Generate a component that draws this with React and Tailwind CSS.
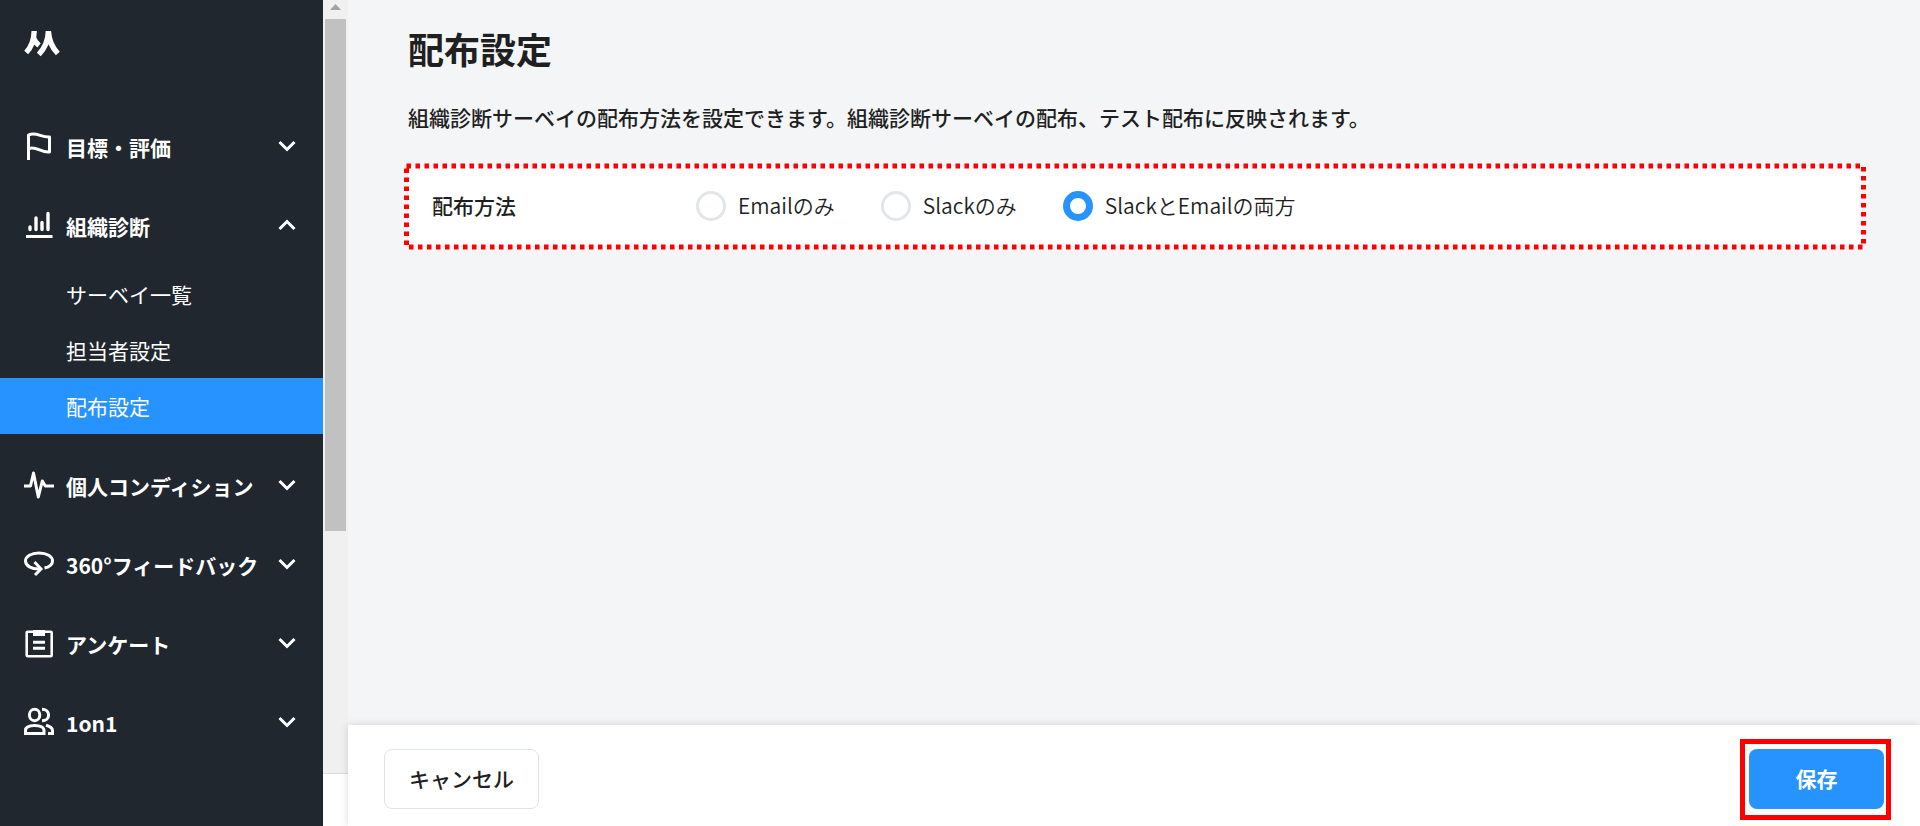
import React, { useState } from "react";

const iconProps = {
  viewBox: "0 0 30 30",
  fill: "none",
  stroke: "currentColor",
  strokeWidth: 3,
  className: "h-[30px] w-[30px] shrink-0",
  "aria-hidden": true,
};

const FlagIcon = () => (
  <svg {...iconProps}>
    <path
      d="M4.500 29V4C12 .5 17 6.500 25.500 6V21C17 22 12.500 14.500 4.500 17.500"
      strokeLinejoin="round"
    />
  </svg>
);

const ChartIcon = () => (
  <svg {...iconProps}>
    <path d="M2 26.500H28.500" />
    <path
      d="M6 17V19.500M12 8V19.500M18 12.500V19.500M24 3.500V19.500"
      strokeWidth="3.400"
      strokeLinecap="round"
    />
  </svg>
);

const PulseIcon = () => (
  <svg {...iconProps}>
    <path d="M0 16H6.500L9.500 3L14.300 27L18.300 11L21.300 16H30" strokeLinejoin="round" />
  </svg>
);

const RotateIcon = () => (
  <svg {...iconProps}>
    <path d="M16.500 20C7 20.500 1.500 16.500 1.500 12C1.500 7.300 7 3.900 15 3.900S28.500 7.300 28.500 12C28.500 15 26 17.800 20.500 19" />
    <path d="M10.500 13L17 20L11 26" />
  </svg>
);

const ClipboardIcon = () => (
  <svg {...iconProps}>
    <rect x="2.700" y="3.700" width="25" height="24.500" rx="1" strokeWidth="2.600" />
    <path d="M9 2H21V8H9Z" fill="currentColor" stroke="none" />
    <path d="M9 14.200H21M9 20.200H21" />
  </svg>
);

const UsersIcon = () => (
  <svg {...iconProps}>
    <ellipse cx="10.600" cy="8" rx="5.200" ry="5.700" />
    <path d="M18 2.200C22 2.200 24.600 4.500 24.600 8S22 13.800 18 13.800" />
    <path d="M1.500 26.600V23.500C1.500 20.500 5 18.500 10.700 18.500S20 20.500 20 23.500V26.600Z" />
    <path d="M22 18.300C26 19.500 28.500 21 28.500 23.500V26.600H24" />
  </svg>
);

const Chevron = ({ open }) => (
  <svg
    viewBox="0 0 18 12"
    fill="none"
    stroke="currentColor"
    strokeWidth="3"
    className="h-3 w-[18px] shrink-0"
    aria-hidden="true"
  >
    <path d={open ? "M1.500 10L9 2.500L16.500 10" : "M1.500 2L9 9.500L16.500 2"} />
  </svg>
);

const Logo = () => (
  <svg viewBox="0 0 36 26" fill="none" stroke="white" strokeWidth="5.400" className="h-[26px] w-9" aria-hidden="true">
    <path d="M2.200 21.500C6.500 17 10 10 10.200 0M9.500 7C11 11 12.500 12.500 15 14.500" />
    <path d="M14.800 23.500C20 18 24.200 11 24.400 0C25 10 28.500 17 33.800 22.500" />
  </svg>
);

const menu = [
  { label: "目標・評価", icon: FlagIcon },
  {
    label: "組織診断",
    icon: ChartIcon,
    children: ["サーベイ一覧", "担当者設定", "配布設定"],
  },
  { label: "個人コンディション", icon: PulseIcon },
  { label: "360°フィードバック", icon: RotateIcon },
  { label: "アンケート", icon: ClipboardIcon },
  { label: "1on1", icon: UsersIcon },
];

const methods = [
  { value: "email", label: "Emailのみ" },
  { value: "slack", label: "Slackのみ" },
  { value: "both", label: "SlackとEmailの両方" },
];

const Sidebar = () => {
  const [openMenu, setOpenMenu] = useState("組織診断");

  return (
    <aside className="w-[323px] shrink-0 bg-[#20272f] text-white">
      <a href="#home" aria-label="ホーム" className="block h-[108px] pt-[31px] pl-6">
        <Logo />
      </a>
      <nav>
        {menu.map(({ label, icon: Icon, children }) => {
          const open = openMenu === label;
          return (
            <div key={label}>
              <button
                type="button"
                aria-expanded={open}
                onClick={() => setOpenMenu(open ? "" : label)}
                className="flex h-[79px] w-full items-center gap-3 pr-[27px] pb-[3px] pl-6 text-left text-[21px] font-bold"
              >
                <Icon />
                <span className="grow pt-1 whitespace-nowrap">{label}</span>
                <Chevron open={open} />
              </button>
              {open && children && (
                <ul className="mb-[13px]">
                  {children.map((child) => (
                    <li key={child}>
                      <a
                        href="#settings"
                        className={`flex h-14 items-center pt-px pl-[66px] text-[21px] ${
                          child === "配布設定" ? "bg-[#2793ff]" : ""
                        }`}
                      >
                        {child}
                      </a>
                    </li>
                  ))}
                </ul>
              )}
            </div>
          );
        })}
      </nav>
    </aside>
  );
};

// Scroll track between the menu and the page
const ScrollTrack = () => (
  <div className="flex w-[25px] shrink-0 flex-col bg-white" aria-hidden="true">
    <div className="grow border-b border-[#dedede] bg-[#f0f0f0] pr-0.5 pl-0.5">
      <div className="flex h-[19px] justify-center pt-1">
        <svg viewBox="0 0 11 6" className="h-1.5 w-[11px]">
          <path d="M5.500 0L11 6H0Z" fill="#a3a3a3" />
        </svg>
      </div>
      <div className="h-[512px] bg-[#c1c1c1]" />
    </div>
    <div className="h-[52px]" />
  </div>
);

const App = () => {
  const [method, setMethod] = useState("both");

  return (
    <div className="flex h-screen min-h-[780px] overflow-hidden bg-[#f3f5f7] font-['Noto_Sans_CJK_JP',sans-serif] text-[21px] text-[#1f1f1f]">
      <Sidebar />
      <ScrollTrack />
      <div className="flex min-w-0 grow flex-col">
        <main className="grow pt-[21px] pr-[57px] pl-[59px]">
          <h1 className="pl-px text-[36px] leading-[54px] font-bold">配布設定</h1>
          <p className="mt-[26px] pl-px leading-8 font-medium">
            組織診断サーベイの配布方法を設定できます。組織診断サーベイの配布、テスト配布に反映されます。
          </p>

          {/* Distribution method */}
          <fieldset
            aria-labelledby="method-label"
            className="relative mt-8 h-[82px] border border-[#eceef0] bg-white"
          >
            <svg className="absolute -top-[3px] -left-1 h-[88px] w-[calc(100%+8px)] overflow-visible" aria-hidden="true">
              <rect
                x="2.500"
                y="3"
                className="h-[81px] w-[calc(100%-5px)]"
                fill="none"
                stroke="#ff0000"
                strokeWidth="5"
                strokeDasharray="4.500 4.500"
              />
            </svg>
            <div className="flex h-full items-center pl-6">
              <span id="method-label" className="w-[264px] font-medium">
                配布方法
              </span>
              <div className="flex gap-[46px]">
                {methods.map(({ value, label }) => (
                  <label key={value} className="flex items-center gap-3 font-[350] whitespace-nowrap">
                    <input
                      type="radio"
                      name="method"
                      value={value}
                      checked={method === value}
                      onChange={() => setMethod(value)}
                      className="h-[30px] w-[30px] appearance-none rounded-full border-3 border-[#e1e6ea] bg-white checked:border-7 checked:border-[#2793ff]"
                    />
                    {label}
                  </label>
                ))}
              </div>
            </div>
          </fieldset>
        </main>

        {/* Action bar */}
        <footer className="flex h-[101px] shrink-0 items-start justify-between bg-white px-9 pt-6 shadow-[0_0_8px_rgba(0,0,0,0.15)]">
          <button
            type="button"
            className="h-[60px] rounded-lg border border-[#dfe4e8] bg-white px-6 font-medium"
          >
            キャンセル
          </button>
          <div className="relative">
            <button
              type="button"
              className="h-[60px] w-[135px] rounded-lg bg-[#2793ff] font-bold text-white"
            >
              保存
            </button>
            <span className="pointer-events-none absolute -top-2.5 -right-[7px] -bottom-[11px] -left-[9px] border-5 border-[#ff0000]" />
          </div>
        </footer>
      </div>
    </div>
  );
};

export default App;
